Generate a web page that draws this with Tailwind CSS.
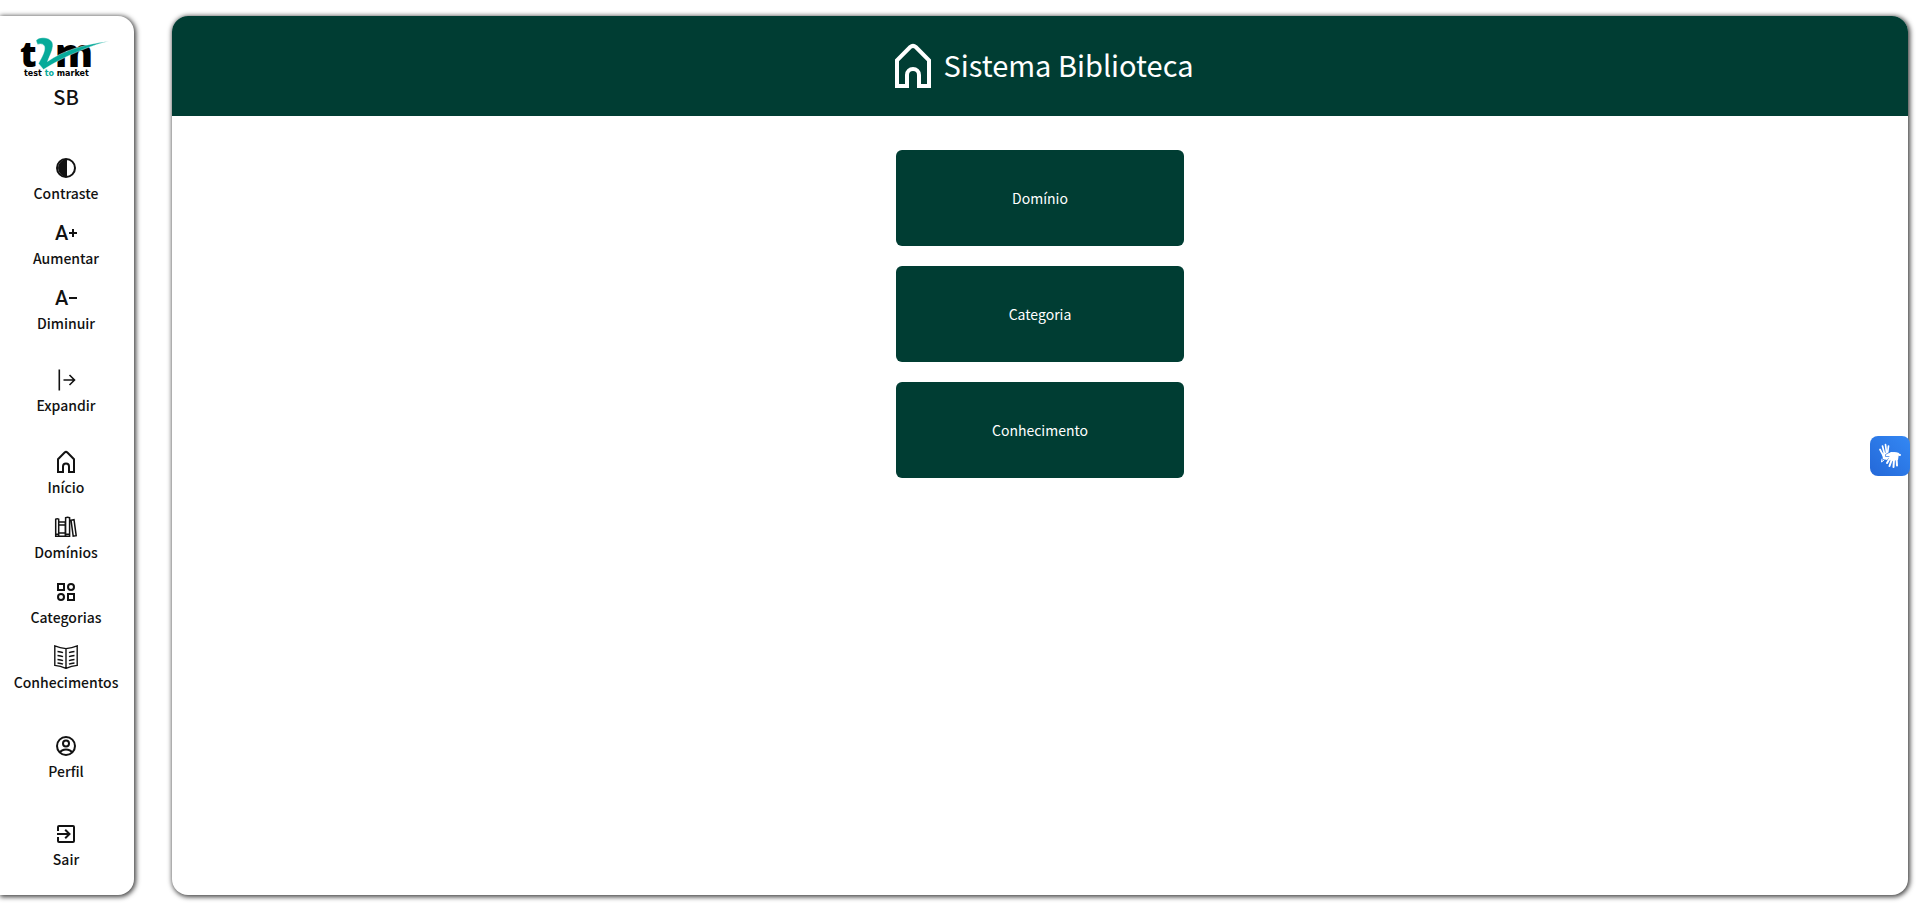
<!DOCTYPE html>
<html lang="pt-BR">
<head>
<meta charset="utf-8">
<title>Sistema Biblioteca</title>
<script src="https://cdn.jsdelivr.net/npm/@tailwindcss/browser@4"></script>
</head>
<body class="bg-white text-[#121212] font-['Noto_Sans_CJK_SC',sans-serif]">
<div class="flex min-h-screen gap-[38px] py-4 pr-3">
  <nav aria-label="Menu principal" class="flex w-[134px] shrink-0 flex-col items-center rounded-r-2xl pr-[2px] pt-5 text-sm leading-6 font-medium shadow-[1px_1px_5px_1px_rgba(0,0,0,0.75)]">
    <a href="#" class="flex flex-col items-center">
      <svg class="h-11 w-24 overflow-visible" viewBox="0 0 96 44" role="img" aria-label="t2m test to market">
        <text x="2" y="31" font-family="Open Sans" font-weight="800" font-size="36">t</text>
        <text x="37" y="31" font-family="Open Sans" font-weight="800" font-size="38">m</text>
        <path d="M18 4.500C20 2 23 1.500 26 1.800C32 2.300 35.500 5.500 34.800 10.500C34 16 31.500 20 29.500 25.500C46 14 66 8.500 91 5.200C74 9 60 15.500 49 20.500C40 24.500 32 29.500 25.500 33.500L20.500 27.500C24 21 27.500 15 26.500 10.500C25.500 7.500 22 7.500 19.500 8.500Z" fill="#06aa9a" stroke="#fff" stroke-width="0.400"/>
        <text x="6" y="40" font-family="DejaVu Sans" font-weight="700" font-size="8">test <tspan fill="#06aa9a">to</tspan> market</text>
      </svg>
      <span class="text-xl font-medium leading-[34px]">SB</span>
    </a>

    <div class="mt-[42px] flex flex-col items-center gap-4">
      <button type="button" class="flex flex-col items-center gap-px">
        <svg class="size-6" viewBox="0 0 24 24"><circle cx="12" cy="12" r="9" fill="none" stroke="currentColor" stroke-width="2"/><path d="M13 3v18a9 9 0 0 1 0-18z" fill="currentColor"/></svg>
        <span>Contraste</span>
      </button>
      <button type="button" class="flex flex-col items-center gap-px">
        <svg class="size-6 overflow-visible" viewBox="0 0 24 24" fill="currentColor"><text x="1" y="19" font-family="Roboto" font-weight="500" font-size="20">A</text><path d="M18 8h2v3h3v2h-3v3h-2v-3h-3v-2h3z"/></svg>
        <span>Aumentar</span>
      </button>
      <button type="button" class="flex flex-col items-center gap-px">
        <svg class="size-6 overflow-visible" viewBox="0 0 24 24" fill="currentColor"><text x="1" y="19" font-family="Roboto" font-weight="500" font-size="20">A</text><path d="M15 11h8v2h-8z"/></svg>
        <span>Diminuir</span>
      </button>
    </div>

    <button type="button" class="mt-[33px] flex flex-col items-center gap-px">
      <svg class="size-6" viewBox="0 0 24 24" fill="none" stroke="currentColor" stroke-width="1.600"><path d="M5.300 1.500v21M9.500 12h11M15.500 7l5 5-5 5"/></svg>
      <span>Expandir</span>
    </button>

    <div class="mt-[33px] flex flex-col items-center gap-4">
      <a href="#" class="flex flex-col items-center gap-px">
        <svg class="size-6" viewBox="0 0 24 24" fill="none" stroke="currentColor" stroke-width="2"><path d="M4 22V9.200l6.600-6.700q1.400-1.200 2.800 0L20 9.200V22h-5v-5.500a3 3 0 0 0-6 0V22z"/></svg>
        <span>Início</span>
      </a>
      <a href="#" class="flex flex-col items-center gap-px">
        <svg class="size-6" viewBox="0 0 24 24" fill="none" stroke="currentColor" stroke-width="1.500"><path d="M1.700 4.200q1.500-.800 3 0v17h-3zM4.700 7h6.600v14.200H4.700zM4.700 10h6.600M4.700 18h6.600M11.600 2.700q2-.900 4 0v18.500h-4zM17 5.200l3-.500 2.200 16-3 .500zM1.700 19.300h3M11.600 19.300h4"/></svg>
        <span>Domínios</span>
      </a>
      <a href="#" class="flex flex-col items-center gap-px">
        <svg class="size-6" viewBox="0 0 24 24" fill="none" stroke="currentColor" stroke-width="2"><path d="M4 4h6v6H4zM14 14h6v6h-6z"/><circle cx="17" cy="7" r="3"/><circle cx="7" cy="17" r="3"/></svg>
        <span>Categorias</span>
      </a>
      <a href="#" class="flex flex-col items-center gap-px">
        <svg class="size-6" viewBox="0 0 24 24" fill="none" stroke="currentColor" stroke-width="1.400"><path d="M12 3.600Q6 3 .800.900v19.500Q6.500 21 12 23.300 17.500 21 23.200 20.400V.900Q18 3 12 3.600zM12 3.600v19.700M3.500 6.500q3.500.200 5.500 1.200M3.500 10.500q3.500.200 5.500 1.200M3.500 14.500q3.500.200 5.500 1.200M3.500 18q3.500.200 5.500 1.200M20.500 6.500q-3.500.200-5.500 1.200M20.500 10.500q-3.500.200-5.500 1.200M20.500 14.500q-3.500.200-5.500 1.200M20.500 18q-3.500.200-5.500 1.200"/></svg>
        <span>Conhecimentos</span>
      </a>
    </div>

    <a href="#" class="mt-10 flex flex-col items-center gap-px">
      <svg class="size-6" viewBox="0 0 24 24" fill="none" stroke="currentColor" stroke-width="2"><circle cx="12" cy="12" r="9"/><circle cx="12" cy="9.500" r="3"/><path d="M6 18.700Q7.500 15.500 12 15.500T18 18.700"/></svg>
      <span>Perfil</span>
    </a>
    <button type="button" class="mt-[39px] flex flex-col items-center gap-px">
      <svg class="size-6" viewBox="0 0 24 24" fill="none" stroke="currentColor" stroke-width="2"><path d="M4 9V5q0-1 1-1h14q1 0 1 1v14q0 1-1 1H5q-1 0-1-1v-4M3 12h12M11.200 7.700l4.300 4.300-4.300 4.300"/></svg>
      <span>Sair</span>
    </button>
  </nav>

  <main class="min-w-0 flex-1 rounded-2xl shadow-[1px_1px_5px_1px_rgba(0,0,0,0.75)]">
    <header class="flex h-[100px] items-center justify-center gap-[7px] rounded-t-2xl bg-[#003d33] pl-[2px] text-white">
      <svg class="size-12" viewBox="0 0 24 24" fill="none" stroke="currentColor" stroke-width="2"><path d="M4 22V9.200l6.600-6.700q1.400-1.200 2.800 0L20 9.200V22h-5v-5.500a3 3 0 0 0-6 0V22z"/></svg>
      <h1 class="pb-1 text-[29px] leading-10">Sistema Biblioteca</h1>
    </header>
    <div class="flex flex-col items-center gap-5 pt-[34px] text-sm text-white">
      <a href="#" class="flex h-24 w-72 items-center justify-center rounded-md bg-[#003d33]">Domínio</a>
      <a href="#" class="flex h-24 w-72 items-center justify-center rounded-md bg-[#003d33]">Categoria</a>
      <a href="#" class="flex h-24 w-72 items-center justify-center rounded-md bg-[#003d33]">Conhecimento</a>
    </div>
  </main>
</div>

<button type="button" aria-label="Traduzir para Libras" class="fixed right-[10px] top-1/2 size-10 -translate-y-1/2 rounded-lg bg-linear-to-tr from-[#2468d8] to-[#3488f4]">
  <svg class="size-10" viewBox="0 0 40 40" fill="#fff" stroke="#fff" stroke-linecap="round">
    <path d="M12 18L18 16L20 20L17 24L13 23Z" stroke="none"/>
    <path d="M13 19L10 13.500M14.500 18L12.500 10M16.500 17L15.500 8.500M17.500 18L18.500 10" fill="none" stroke-width="1.700"/>
    <path d="M19 17Q24 15 29 17L28 24L21 25L18 21Z" stroke="none"/>
    <path d="M22 17L16.500 19M20 22L17 27M22 23L19.500 30M24 23L23.500 31M26.500 22L27 29.500M27 18L30 19" fill="none" stroke-width="2"/>
    <path d="M12 23L11.500 26L14 24" fill="none" stroke-width="1"/>
    <path d="M20 16L15.500 18.500L15.500 20.500L19 20.500" fill="none" stroke="#2a73df" stroke-width="0.700"/>
  </svg>
</button>
</body>
</html>
